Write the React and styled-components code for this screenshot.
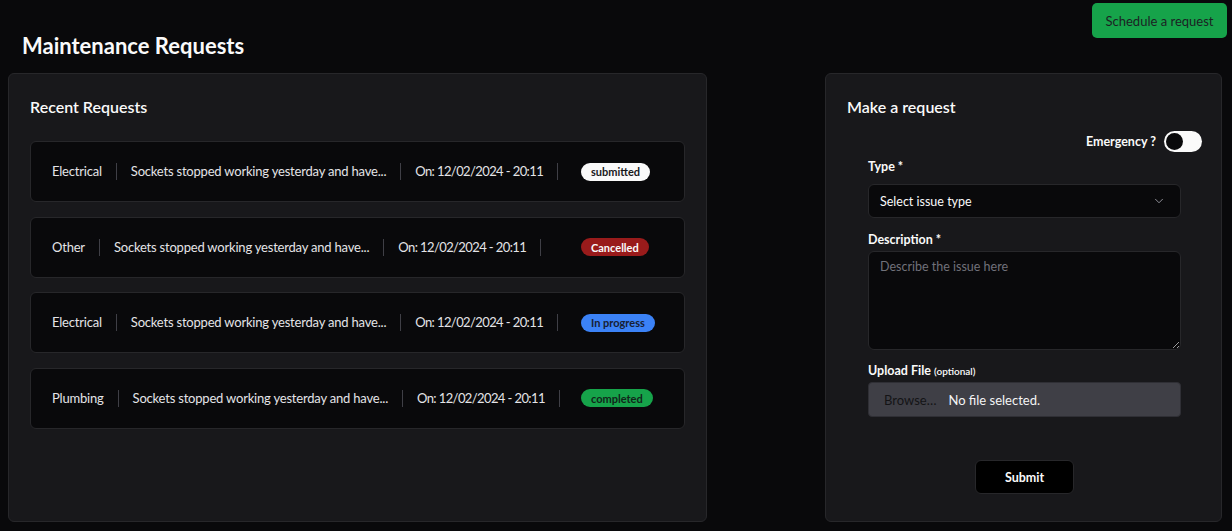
import React from 'react'
import styled, {createGlobalStyle} from 'styled-components'
import {ChevronDown} from 'lucide-react'

////////////////////////////// Global
const GlobalStyle = createGlobalStyle`
  html, body {
    margin: 0;
    padding: 0;
    background: #09090b;
    color: #fafafa;
    font-family: Lato, "Open Sans", sans-serif;
  }
  * { box-sizing: border-box; }
`

////////////////////////////// Layout
const Page = styled.div`
  height: 531px;
  padding: 3px 5px 9px 8px;
  display: flex;
  flex-direction: column;
`

const Header = styled.header`
  height: 70px;
  display: flex;
  justify-content: space-between;
  align-items: flex-start;
`

const Title = styled.h1`
  margin: 31px 0 0 14px;
  font-size: 22px;
  font-weight: 700;
  color: #fafafa;
  line-height: 24px;
`

const ScheduleButton = styled.button`
  width: 135px;
  height: 35px;
  border: none;
  border-radius: 5px;
  background: #16a34a;
  color: #1c1f24;
  font-family: inherit;
  font-size: 13px;
`

const Columns = styled.main`
  flex: 1;
  display: flex;
  justify-content: space-between;
  padding-right: 5px;
`

const Panel = styled.section`
  width: ${p => p.$width}px;
  background: #18181b;
  border: 1px solid #27272a;
  border-radius: 6px;
  padding: 23px 21px 0 21px;
  display: flex;
  flex-direction: column;
`

const PanelTitle = styled.h2`
  margin: 0;
  font-size: 16px;
  font-weight: 600;
  line-height: 20px;
  color: #fafafa;
`

////////////////////////////// Requests list
const RequestList = styled.div`
  margin-top: 24px;
  display: flex;
  flex-direction: column;
  gap: 14.5px;
`

const RequestRow = styled.div`
  height: 61px;
  background: #09090b;
  border: 1px solid #27272a;
  border-radius: 6px;
  padding: 0 22px 0 21px;
  display: flex;
  align-items: center;
  font-size: 13px;
  letter-spacing: -0.2px;
  color: #e4e4e7;
`

const Cell = styled.span`
  padding: 0 14px;
  border-right: 1px solid #3f3f46;
  line-height: 17px;
  white-space: nowrap;
  letter-spacing: ${p => p.$tight ? '-0.6px' : 'inherit'};
  &:first-child { padding-left: 0; }
`

const BadgeSlot = styled.div`
  margin-left: auto;
  width: 81px;
`

const badgeColors = {
  submitted: {bg: '#fafafa', fg: '#18181b'},
  Cancelled: {bg: '#991b1b', fg: '#fafafa'},
  'In progress': {bg: '#3b82f6', fg: '#172033'},
  completed: {bg: '#16a34a', fg: '#11261a'},
}

const Badge = styled.span`
  display: inline-flex;
  align-items: center;
  height: 18px;
  padding: 0 10px;
  border-radius: 9px;
  font-size: 11px;
  font-weight: 700;
  letter-spacing: 0;
  background: ${p => badgeColors[p.$status].bg};
  color: ${p => badgeColors[p.$status].fg};
`

////////////////////////////// Form
const EmergencyRow = styled.div`
  margin: 14px -2px 0 0;
  display: flex;
  justify-content: flex-end;
  align-items: center;
  gap: 8px;
  font-size: 12.5px;
  font-weight: 700;
`

const Toggle = styled.span`
  width: 38px;
  height: 21px;
  border-radius: 11px;
  background: #fafafa;
  padding: 2px;
  display: flex;
  &::before {
    content: '';
    width: 17px;
    height: 17px;
    border-radius: 50%;
    background: #09090b;
  }
`

const Form = styled.form`
  width: 313px;
  margin: 7px 19px 0 auto;
  display: flex;
  flex-direction: column;
`

const Label = styled.label`
  font-size: 12.5px;
  font-weight: 700;
  line-height: 15px;
  margin: ${p => p.$top}px 0 ${p => p.$bottom}px;
  small {
    font-size: 10px;
    font-weight: 600;
  }
`

const SelectBox = styled.div`
  flex: none;
  height: 34px;
  background: #09090b;
  border: 1px solid #27272a;
  border-radius: 6px;
  padding: 0 14px 0 11px;
  display: flex;
  align-items: center;
  justify-content: space-between;
  font-size: 12.5px;
  color: #fafafa;
  svg { color: #a1a1aa; }
`

const TextArea = styled.textarea`
  flex: none;
  height: 99px;
  background: #09090b;
  border: 1px solid #27272a;
  border-radius: 6px;
  padding: 7px 11px;
  font-family: inherit;
  font-size: 12.5px;
  color: #fafafa;
  resize: vertical;
  &::placeholder { color: #71717a; }
`

const FileBox = styled.div`
  flex: none;
  height: 35px;
  background: #3f3f46;
  border: 1px solid #2f2f35;
  border-radius: 4px;
  padding: 0 15px;
  display: flex;
  align-items: center;
  gap: 12px;
  font-size: 13px;
  color: #f4f4f5;
`

const BrowseText = styled.span`
  color: #141416;
`

const SubmitButton = styled.button`
  align-self: center;
  margin-top: 43px;
  width: 99px;
  height: 34px;
  background: #000;
  border: 1px solid #27272a;
  border-radius: 6px;
  color: #fafafa;
  font-family: inherit;
  font-size: 12.5px;
  font-weight: 700;
`

const requests = [
  {type: 'Electrical', status: 'submitted'},
  {type: 'Other', status: 'Cancelled'},
  {type: 'Electrical', status: 'In progress'},
  {type: 'Plumbing', status: 'completed'},
]

export default function App() {
  return (
    <>
      <GlobalStyle />
      <Page>
        <Header>
          <Title>Maintenance Requests</Title>
          <ScheduleButton>Schedule a request</ScheduleButton>
        </Header>
        <Columns>
          <Panel $width={699}>
            <PanelTitle>Recent Requests</PanelTitle>
            <RequestList>
              {requests.map((r, i) => (
                <RequestRow key={i}>
                  <Cell>{r.type}</Cell>
                  <Cell>Sockets stopped working yesterday and have...</Cell>
                  <Cell $tight>On: 12/02/2024 - 20:11</Cell>
                  <BadgeSlot><Badge $status={r.status}>{r.status}</Badge></BadgeSlot>
                </RequestRow>
              ))}
            </RequestList>
          </Panel>
          <Panel $width={397}>
            <PanelTitle>Make a request</PanelTitle>
            <EmergencyRow>Emergency ? <Toggle /></EmergencyRow>
            <Form onSubmit={e => e.preventDefault()}>
              <Label $top={0} $bottom={10}>Type *</Label>
              <SelectBox>
                <span>Select issue type</span>
                <ChevronDown size={14} strokeWidth={1.5} />
              </SelectBox>
              <Label $top={14} $bottom={4}>Description *</Label>
              <TextArea placeholder="Describe the issue here" />
              <Label $top={13} $bottom={3}>Upload File <small>(optional)</small></Label>
              <FileBox>
                <BrowseText>Browse…</BrowseText>
                <span>No file selected.</span>
              </FileBox>
              <SubmitButton type="submit">Submit</SubmitButton>
            </Form>
          </Panel>
        </Columns>
      </Page>
    </>
  )
}
